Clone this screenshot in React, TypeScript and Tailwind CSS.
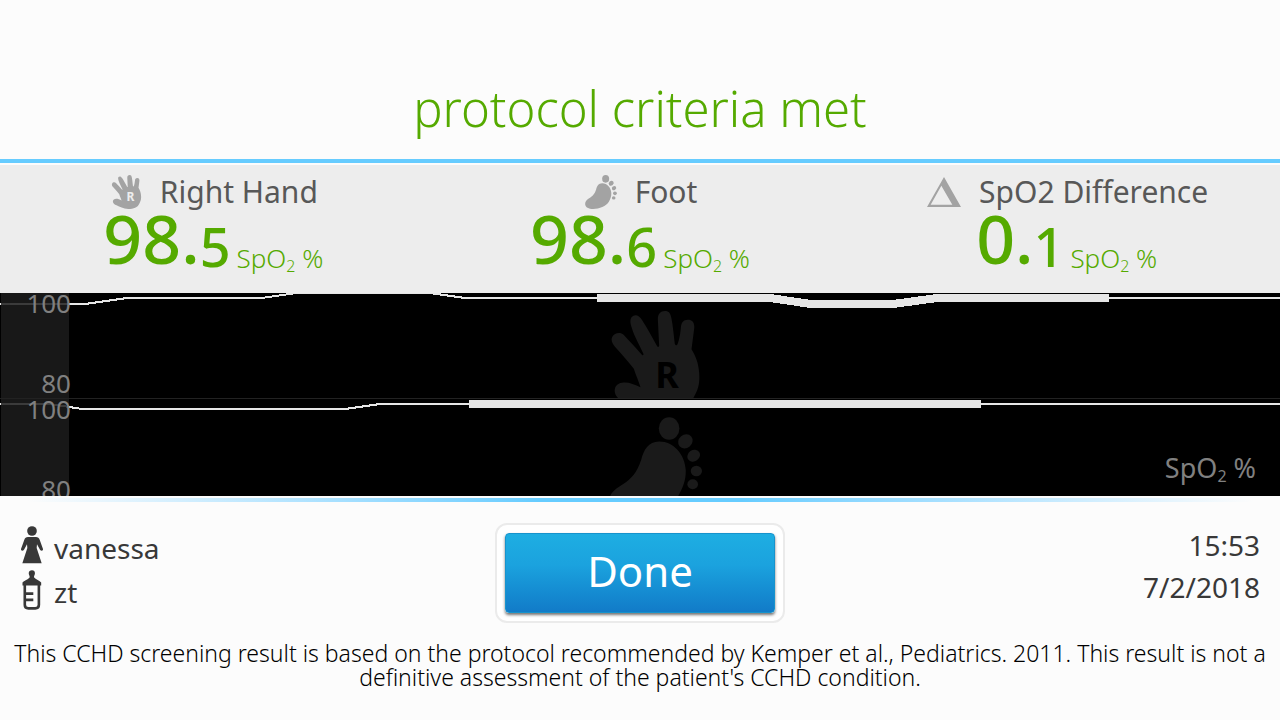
type IconProps = { className?: string; letterFill?: string };

function HandIcon({ className, letterFill }: IconProps) {
  return (
    <svg viewBox="152 77 266 306" className={className} fill="currentColor" aria-hidden="true">
      <path d="M240 306C222 296 200 289 185 292C168 294 161 306 163 321C166 336 178 344 195 350C225 362 255 383 300 383C350 383 385 368 400 335C415 310 418 290 416 262C414 232 405 212 393 192L401 130C403 112 396 103 382 103C368 103 362 112 361 128C359 150 354 172 350 178Q346 182 343 176C340 150 337 120 333 100C330 84 326 77 313 77C300 77 292 86 292 102L296 182Q293 187 290 183C275 155 258 125 245 105C235 88 222 86 213 96C207 105 210 115 214 128C222 155 240 185 249 206Q249 213 244 208C226 188 205 165 190 149C178 138 162 143 155 155C150 168 157 177 166 187C185 208 205 230 220 250C226 270 236 290 240 306Z" />
      <text x="320" y="309" textAnchor="middle" fontSize="108" fontWeight="700" fill={letterFill}>
        R
      </text>
    </svg>
  );
}

function FootIcon({ className }: IconProps) {
  return (
    <svg viewBox="144 392 280 300" className={className} fill="currentColor" aria-hidden="true">
      <ellipse cx="325" cy="426" rx="31" ry="34" />
      <ellipse cx="374" cy="465" rx="23" ry="20" transform="rotate(-40 374 465)" />
      <ellipse cx="399" cy="508" rx="20" ry="17" transform="rotate(-35 399 508)" />
      <ellipse cx="407" cy="554" rx="17" ry="16" />
      <ellipse cx="396" cy="594" rx="16" ry="15" />
      <path d="M295 465C262 465 249 490 241 520C228 560 212 576 187 593C160 610 144 622 144 648C146 680 175 692 215 692C270 690 330 665 352 630C368 602 376 580 375 550C372 505 340 465 295 465Z" />
    </svg>
  );
}

function DeltaIcon({ className }: IconProps) {
  return (
    <svg viewBox="0 0 102 90" className={className} fill="currentColor" fillRule="evenodd" aria-hidden="true">
      <path d="M51 0L102 90H0ZM43 26L11 83H76Z" />
    </svg>
  );
}

function MotherIcon({ className }: IconProps) {
  return (
    <svg viewBox="62 92 68 114" className={className} fill="currentColor" aria-hidden="true">
      <circle cx="96" cy="107" r="14.5" />
      <path d="M84 125H108C114 125 117 128 119 133L129 161Q130 165 126 166Q122 166 120 163L111 147L110 158L125 204H67L82 158L81 147L72 163Q70 166 66 166Q62 165 63 161L73 133C75 128 78 125 84 125Z" />
    </svg>
  );
}

function BottleIcon({ className }: IconProps) {
  return (
    <svg viewBox="65 224 60 122" className={className} fill="currentColor" aria-hidden="true">
      <path d="M95 225C101 225 104 229 104 234C104 239 101 241 101 246C106 253 119 257 123 262V271H66V262C70 257 84 253 88 246C88 241 85 239 85 234C85 229 89 225 95 225Z" />
      <path
        d="M73 269V330Q73 341 84 341H105Q116 341 116 330V269M77 296H99M77 315H99"
        fill="none"
        stroke="currentColor"
        strokeWidth="8"
      />
    </svg>
  );
}

type MetricProps = { icon: React.ReactNode; label: string; whole: string; tenth: string };

function Metric({ icon, label, whole, tenth }: MetricProps) {
  return (
    <div className="flex flex-col items-center">
      <h2 className="flex h-7 items-center gap-[18px] pl-0.5 text-[30px] leading-7 text-[#585858]">
        <span className="text-[#a3a3a3]">{icon}</span>
        {label}
      </h2>
      <p className="flex items-end text-[#5a0]">
        <span className="text-[68px] leading-[64px] font-medium">{whole}.</span>
        <span className="text-[54px] leading-[48px] font-medium">{tenth}</span>
        <span className="ml-1.5 text-[26px] leading-4 font-light">
          SpO<sub className="text-base leading-none">2</sub> %
        </span>
      </p>
    </div>
  );
}

type PanelProps = { className: string; height: number; thin: string[]; thick: string; children: React.ReactNode };

function TrendPanel({ className, height, thin, thick, children }: PanelProps) {
  return (
    <div className={`relative overflow-hidden ${className}`}>
      <div className="absolute inset-0 flex justify-center pl-[30px] pt-[18px] text-[#1a1a1a]">{children}</div>
      <svg
        viewBox={`0 0 1280 ${height}`}
        preserveAspectRatio="none"
        className="absolute inset-0 size-full"
        fill="none"
        stroke="#e6e6e6"
        shapeRendering="crispEdges"
        aria-hidden="true"
      >
        {thin.map((points) => (
          <polyline key={points} points={points} strokeWidth="2" />
        ))}
        <polyline points={thick} strokeWidth="8" />
      </svg>
      <div className="relative ml-px flex h-full w-[68px] flex-col bg-[#1c1c1c]/85">
        <div className="-mr-0.5 flex flex-col gap-[60px] text-right text-[26px] leading-5 text-[#808080]">
          <span>100</span>
          <span>80</span>
        </div>
      </div>
    </div>
  );
}

export default function App() {
  return (
    <main className="flex min-h-screen flex-col bg-[#fcfcfc] font-['Noto_Sans','Open_Sans',sans-serif]">
      <header className="border-b-4 border-[#6cf] pt-[74px] pb-[17px] text-center">
        <h1 className="text-[49px] leading-[68px] font-light text-[#5a0]">protocol criteria met</h1>
      </header>

      <section className="mt-0.5 grid h-32 grid-cols-3 bg-[#ededed] pt-[13px]">
        <Metric
          icon={<HandIcon className="h-[34px] w-[31px]" letterFill="#ededed" />}
          label="Right Hand"
          whole="98"
          tenth="5"
        />
        <Metric icon={<FootIcon className="h-[34px] w-8" />} label="Foot" whole="98" tenth="6" />
        <Metric icon={<DeltaIcon className="h-[30px] w-[34px]" />} label="SpO2 Difference" whole="0" tenth="1" />
      </section>

      <section className="relative bg-black">
        <TrendPanel
          className="h-[106px] border-b border-[#222]"
          height={105}
          thin={['0,11 85,11 127,5 262,5 296,0 430,0 465,5 597,5', '1109,5 1280,5']}
          thick="597,5 770,5 811,11 893,11 937,5 1109,5"
        >
          <HandIcon className="h-[102px] w-[89px] shrink-0" letterFill="#000" />
        </TrendPanel>
        <TrendPanel
          className="h-[97px]"
          height={97}
          thin={['0,5 50,5 82,10 345,10 380,5 469,5', '981,5 1280,5']}
          thick="469,5 981,5"
        >
          <FootIcon className="h-[100px] w-[93px] shrink-0" />
        </TrendPanel>
        <p className="absolute right-6 bottom-3 text-[27px] leading-[32px] text-[#808080]">
          SpO<sub className="text-base leading-none">2</sub> %
        </p>
      </section>

      <div className="mt-0.5 flex h-1 bg-[#6cf]">
        <div className="w-[42%] bg-linear-to-r from-[#fcfcfc] from-5% to-[#6cf]" />
        <div className="ml-auto w-[42%] bg-linear-to-l from-[#fcfcfc] from-5% to-[#6cf]" />
      </div>

      <footer className="flex flex-1 flex-col text-[#383838]">
        <div className="grid grid-cols-3 items-start px-5 pt-[21px] text-[28px]">
          <ul className="flex flex-col gap-1 pt-[5px]">
            <li className="flex h-10 items-center gap-2.5">
              <MotherIcon className="-mt-1.5 h-[38px] w-6" />
              <span className="leading-10">vanessa</span>
            </li>
            <li className="flex h-10 items-center gap-2.5">
              <BottleIcon className="-mt-1 h-10 w-6" />
              <span className="leading-10">zt</span>
            </li>
          </ul>
          <div className="justify-self-center rounded-xl border-2 border-[#ebebeb] bg-white p-2">
            <button
              type="button"
              className="h-20 w-[270px] rounded-[4px] border border-[#1793cc] bg-linear-to-b from-[#1eaee2] via-[#1ba2de] via-40% to-[#127bc8] pb-1.5 text-[42px] text-white shadow-[0_2px_3px_rgba(0,0,0,0.55)]"
            >
              Done
            </button>
          </div>
          <div className="flex flex-col pt-px text-right leading-[42px]">
            <time>15:53</time>
            <time>7/2/2018</time>
          </div>
        </div>
        <p className="mt-[18px] px-2 text-center text-[23px] leading-6 font-light text-black">
          This CCHD screening result is based on the protocol recommended by Kemper et al., Pediatrics. 2011. This
          result is not a definitive assessment of the patient's CCHD condition.
        </p>
      </footer>
    </main>
  );
}
